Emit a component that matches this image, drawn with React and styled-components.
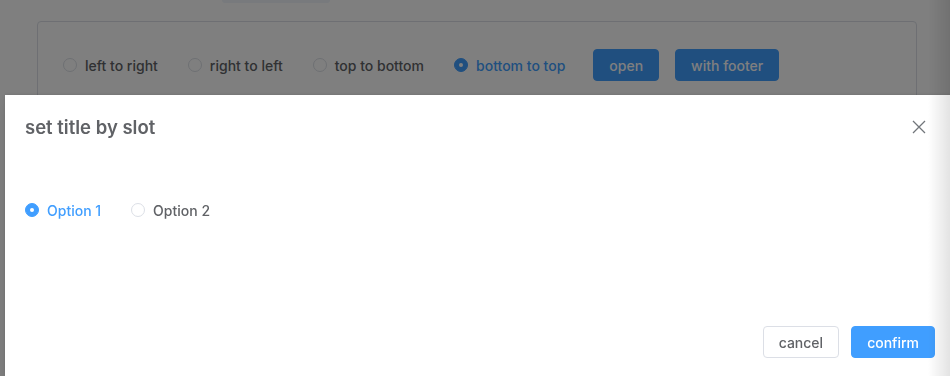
import React, { useState } from 'react';
import styled, { createGlobalStyle } from 'styled-components';

const GlobalStyle = createGlobalStyle`
  html, body {
    margin: 0;
    padding: 0;
    background: #ffffff;
    overflow: hidden;
  }
  body {
    font-family: Inter, "Liberation Sans", sans-serif;
    -webkit-font-smoothing: antialiased;
  }
`;

const Page = styled.div`
  width: 950px;
  height: 376px;
  box-sizing: border-box;
  padding: 0 33px 0 37px;
  overflow: hidden;
`;

const TopStub = styled.div`
  width: 108px;
  height: 3px;
  margin-left: 185px;
  background: #f0f4fa;
  border-radius: 0 0 4px 4px;
`;

const Card = styled.div`
  margin-top: 18px;
  border: 1px solid #dcdfe6;
  border-radius: 4px;
  height: 355px;
  box-sizing: border-box;
  padding: 27px 25px;
`;

const Row = styled.div`
  display: flex;
  align-items: center;
`;

const RadioGroup = styled.div`
  display: flex;
  align-items: center;
  height: 32px;
`;

const RadioItem = styled.label`
  display: inline-flex;
  align-items: center;
  gap: 8px;
  height: 32px;
  margin-right: ${p => (p.$last ? '0' : '30px')};
  font-size: 14px;
  font-weight: 500;
  color: ${p => (p.$checked ? '#409eff' : '#606266')};
  cursor: pointer;
  white-space: nowrap;
`;

const Circle = styled.span`
  width: 14px;
  height: 14px;
  box-sizing: border-box;
  border-radius: 50%;
  border: 1px solid ${p => (p.$checked ? '#409eff' : '#dcdfe6')};
  background: ${p => (p.$checked ? '#409eff' : '#ffffff')};
  display: flex;
  align-items: center;
  justify-content: center;

  &::after {
    content: '';
    width: 4px;
    height: 4px;
    border-radius: 50%;
    background: #ffffff;
    display: ${p => (p.$checked ? 'block' : 'none')};
  }
`;

const Button = styled.button`
  height: 32px;
  padding: 0 15px;
  border-radius: 4px;
  font-family: inherit;
  font-size: 14px;
  font-weight: 500;
  cursor: pointer;
  border: 1px solid ${p => (p.$primary ? '#409eff' : '#dcdfe6')};
  background: ${p => (p.$primary ? '#409eff' : '#ffffff')};
  color: ${p => (p.$primary ? '#ffffff' : '#606266')};
  margin-left: ${p => p.$ml || '0'};
`;

const Overlay = styled.div`
  position: fixed;
  inset: 0;
  background: rgba(0, 0, 0, 0.5);
  overflow: hidden;
`;

const Drawer = styled.div`
  position: absolute;
  left: 5px;
  bottom: 0;
  width: 950px;
  height: 281px;
  background: #ffffff;
  display: flex;
  flex-direction: column;
  box-shadow: 0 8px 16px rgba(0, 0, 0, 0.08), 0 0 4px rgba(0, 0, 0, 0.12);
`;

const Header = styled.header`
  display: flex;
  align-items: center;
  justify-content: space-between;
  padding: 20px 20px 0;
  margin-bottom: 32px;
`;

const Title = styled.span`
  font-size: 18.5px;
  line-height: 24px;
  font-weight: 600;
  color: #606266;
`;

const CloseBtn = styled.button`
  width: 24px;
  height: 24px;
  padding: 0;
  border: none;
  background: none;
  display: flex;
  align-items: center;
  justify-content: center;
  color: #72767b;
  cursor: pointer;
  margin-right: 4px;
`;

const Body = styled.div`
  flex: 1;
  padding: 23px 20px 0;
`;

const Footer = styled.footer`
  display: flex;
  justify-content: flex-end;
  gap: 12px;
  padding: 10px 20px 18px;
`;

const EdgeFade = styled.div`
  position: fixed;
  top: 0;
  right: 0;
  bottom: 0;
  width: 22px;
  pointer-events: none;
  background: linear-gradient(to right, rgba(0, 0, 0, 0), rgba(0, 0, 0, 0.11));
`;

const Radio = ({ checked, last, children, onClick }) => (
  <RadioItem $checked={checked} $last={last} onClick={onClick}>
    <Circle $checked={checked} />
    {children}
  </RadioItem>
);

const directions = ['left to right', 'right to left', 'top to bottom', 'bottom to top'];

export default function App() {
  const [direction, setDirection] = useState('bottom to top');
  const [option, setOption] = useState('1');

  return (
    <>
      <GlobalStyle />
      <Page>
        <TopStub />
        <Card>
          <Row>
            <RadioGroup>
              {directions.map((d, i) => (
                <Radio
                  key={d}
                  checked={direction === d}
                  last={i === directions.length - 1}
                  onClick={() => setDirection(d)}
                >
                  {d}
                </Radio>
              ))}
            </RadioGroup>
            <Button $primary $ml="28px">open</Button>
            <Button $primary $ml="16px">with footer</Button>
          </Row>
        </Card>
      </Page>

      <Overlay>
        <Drawer>
          <Header>
            <Title>set title by slot</Title>
            <CloseBtn aria-label="close">
              <svg width="14" height="14" viewBox="0 0 14 14" fill="none">
                <path d="M1 1L13 13M13 1L1 13" stroke="currentColor" strokeWidth="1.3" />
              </svg>
            </CloseBtn>
          </Header>
          <Body>
            <RadioGroup>
              <Radio checked={option === '1'} onClick={() => setOption('1')}>Option 1</Radio>
              <Radio checked={option === '2'} last onClick={() => setOption('2')}>Option 2</Radio>
            </RadioGroup>
          </Body>
          <Footer>
            <Button>cancel</Button>
            <Button $primary>confirm</Button>
          </Footer>
        </Drawer>
      </Overlay>
      <EdgeFade />
    </>
  );
}
